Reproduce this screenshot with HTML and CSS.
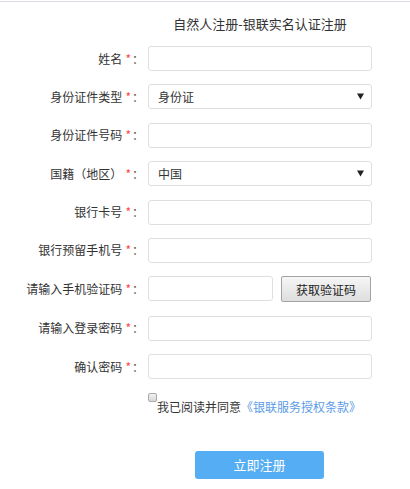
FILE: index.html
```html
<!DOCTYPE html>
<html lang="zh-CN">
<head>
<meta charset="utf-8">
<title>自然人注册-银联实名认证注册</title>
<link rel="stylesheet" href="styles.css">
</head>
<body>
<div class="topline"></div>
<h1 class="title">自然人注册-银联实名认证注册</h1>
<form class="form">
  <label class="label">姓名<span class="req">*</span><span class="colon">：</span></label>
  <input class="field" type="text">

  <label class="label">身份证件类型<span class="req">*</span><span class="colon">：</span></label>
  <div class="select-wrap">
    <select class="field select"><option>身份证</option></select>
    <svg class="arrow" width="7" height="7" viewBox="0 0 7 7"><path d="M0 0.5H7L3.5 6.5Z" fill="#222"/></svg>
  </div>

  <label class="label">身份证件号码<span class="req">*</span><span class="colon">：</span></label>
  <input class="field" type="text">

  <label class="label">国籍（地区）<span class="req">*</span><span class="colon">：</span></label>
  <div class="select-wrap">
    <select class="field select"><option>中国</option></select>
    <svg class="arrow" width="7" height="7" viewBox="0 0 7 7"><path d="M0 0.5H7L3.5 6.5Z" fill="#222"/></svg>
  </div>

  <label class="label">银行卡号<span class="req">*</span><span class="colon">：</span></label>
  <input class="field" type="text">

  <label class="label">银行预留手机号<span class="req">*</span><span class="colon">：</span></label>
  <input class="field" type="text">

  <label class="label">请输入手机验证码<span class="req">*</span><span class="colon">：</span></label>
  <div class="code-row">
    <input class="field code" type="text">
    <button type="button" class="get-code">获取验证码</button>
  </div>

  <label class="label">请输入登录密码<span class="req">*</span><span class="colon">：</span></label>
  <input class="field" type="password">

  <label class="label">确认密码<span class="req">*</span><span class="colon">：</span></label>
  <input class="field" type="password">

  <div class="agree">
    <span class="check"></span>
    <span class="agree-text">我已阅读并同意<a class="link" href="#">《银联服务授权条款》</a></span>
  </div>
</form>
<button type="button" class="submit">立即注册</button>
</body>
</html>
```
FILE: styles.css
```css
html, body {
  margin: 0;
  padding: 0;
  background: #fff;
}
body {
  font-family: "Noto Sans CJK SC", "Microsoft YaHei", sans-serif;
  color: #333;
}
.topline {
  margin-top: 1px;
  border-top: 1px solid #dedbe4;
}
.title {
  margin: 0 0 0 148px;
  width: 224px;
  padding-top: 12px;
  font-size: 13px;
  font-weight: normal;
  line-height: 20px;
  text-align: center;
  color: #333;
}
.form {
  margin-top: 12px;
  display: grid;
  grid-template-columns: 148px 224px;
  row-gap: 13.4px;
  align-items: center;
}
.label {
  font-size: 12px;
  line-height: 16px;
  text-align: right;
  padding-right: 4px;
  color: #333;
  white-space: nowrap;
}
.req {
  color: #f44;
  margin-left: 3px;
}
.colon {
  color: #5f553a;
  margin-left: 1px;
}
.field {
  box-sizing: border-box;
  display: block;
  width: 224px;
  height: 25px;
  margin: 0;
  border: 1px solid #dfdfdf;
  border-radius: 3px;
  background: #fff;
  font-family: inherit;
  font-size: 12px;
  color: #333;
  padding: 0 9px;
  outline: none;
}
.select-wrap {
  position: relative;
  width: 224px;
}
.select {
  -webkit-appearance: none;
  appearance: none;
}
.arrow {
  position: absolute;
  right: 8px;
  top: 9px;
  pointer-events: none;
}
.code-row {
  display: flex;
  gap: 8px;
}
.field.code {
  width: 125px;
}
.get-code {
  box-sizing: border-box;
  width: 90px;
  height: 26px;
  margin: 0;
  border: 1px solid #a3a3a3;
  border-radius: 2px;
  background: linear-gradient(#f6f6f6, #dedede);
  font-family: inherit;
  font-size: 12px;
  color: #222;
  padding: 0;
}
.agree {
  grid-column: 2;
  display: flex;
  align-items: flex-start;
  align-self: start;
}
.check {
  box-sizing: border-box;
  width: 9px;
  height: 9px;
  border: 1px solid #a9a9a9;
  border-radius: 2px;
  background: linear-gradient(#f2f2f2, #d8d8d8);
  flex: none;
}
.agree-text {
  margin-top: 7px;
  font-size: 12px;
  line-height: 14px;
  color: #333;
  white-space: nowrap;
}
.link {
  color: #5b9be6;
  text-decoration: none;
}
.submit {
  display: block;
  box-sizing: border-box;
  margin: 37px 0 0 195px;
  width: 129px;
  height: 28px;
  border: none;
  border-radius: 3px;
  background: #55adf3;
  color: #fff;
  font-family: inherit;
  font-size: 13px;
  padding: 0;
}
```
